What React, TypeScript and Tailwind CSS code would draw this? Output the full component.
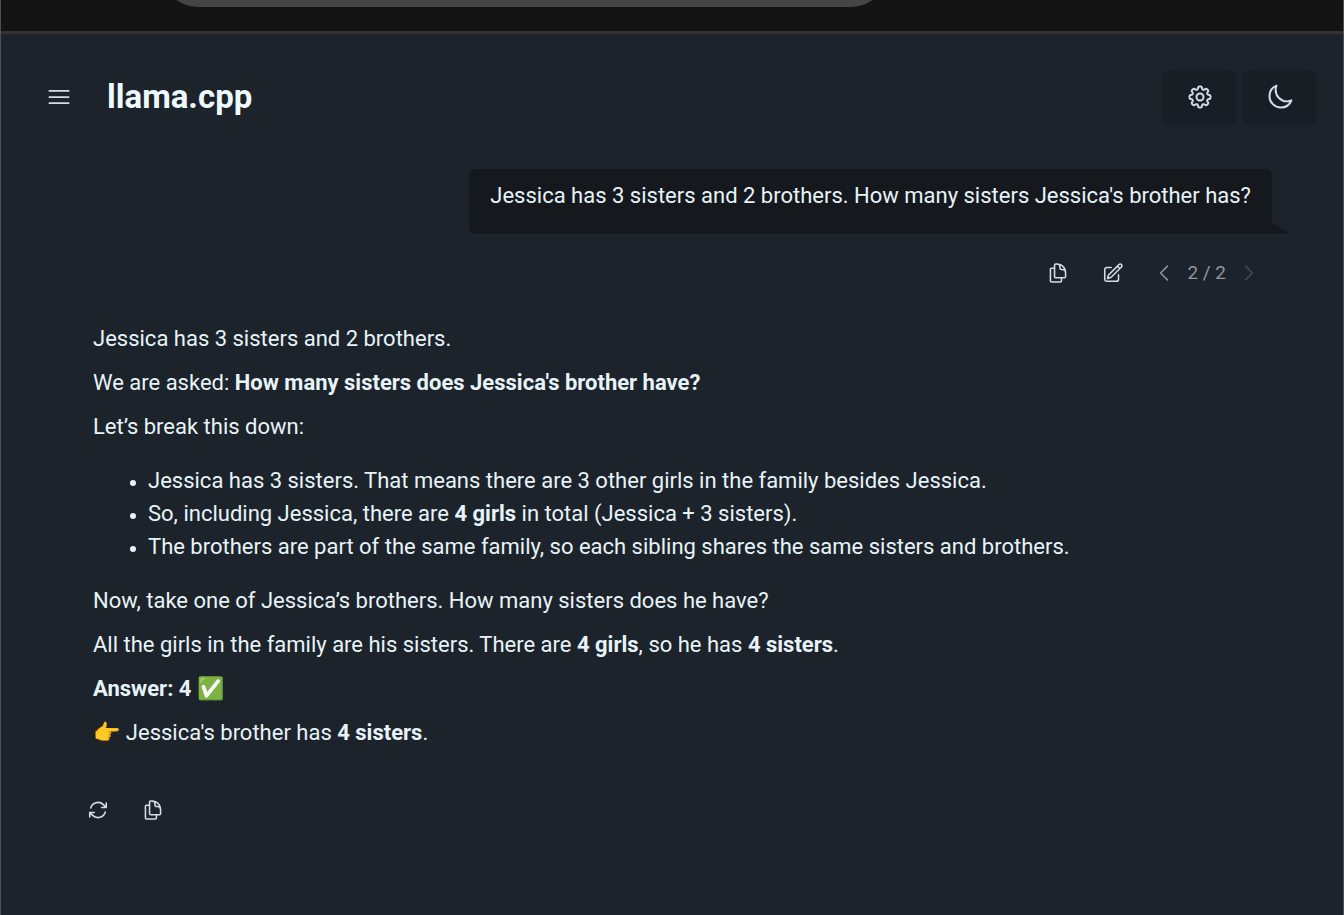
import type { ReactNode } from "react";
import { clsx } from "clsx";
import {
    HiOutlineArrowPath,
    HiOutlineBars3,
    HiOutlineChevronLeft,
    HiOutlineChevronRight,
    HiOutlineCog8Tooth,
    HiOutlineDocumentDuplicate,
    HiOutlineMoon,
    HiOutlinePencilSquare,
} from "react-icons/hi2";

interface IconButtonProps {
    label: string;
    children: ReactNode;
    className?: string;
    disabled?: boolean;
}

function IconButton({ label, children, className, disabled }: IconButtonProps) {
    return (
        <button
            type="button"
            aria-label={label}
            disabled={disabled}
            className={clsx("flex items-center justify-center text-[#d3dde5]", className)}
        >
            {children}
        </button>
    );
}

// Bottom edge of the browser toolbar with its address field
function BrowserEdge() {
    return (
        <div className="h-[34px] overflow-hidden border-b-3 border-[#333432] bg-[#141414]">
            <div className="-mt-[65px] ml-[12%] h-[72px] w-[54%] rounded-full bg-[#454545]" />
        </div>
    );
}

function Header() {
    return (
        <header className="flex items-center pt-9 pr-[27px] pl-11">
            <IconButton label="Open conversations" className="size-7">
                <HiOutlineBars3 className="size-7" />
            </IconButton>
            <h1 className="ml-[34px] grow text-[33px] leading-[44px] font-bold text-[#ecf9ff]">llama.cpp</h1>
            <div className="flex gap-[7px]">
                <IconButton label="Settings" className="h-[54px] w-[73px] rounded-md border border-[#191e24] bg-[#191e24] shadow-sm">
                    <HiOutlineCog8Tooth className="size-7 stroke-[1.7]" />
                </IconButton>
                <IconButton label="Theme" className="h-[54px] w-[73px] rounded-md border border-[#191e24] bg-[#191e24] shadow-sm">
                    <HiOutlineMoon className="size-7 stroke-[1.7]" />
                </IconButton>
            </div>
        </header>
    );
}

function UserMessage() {
    return (
        <section className="flex flex-col items-end pr-[71px] pt-[45px]">
            <div className="relative rounded-md rounded-br-none bg-[#15191e] px-[21px] pt-2.5 pb-[22px]">
                <p>Jessica has 3 sisters and 2 brothers. How many sisters Jessica's brother has?</p>
                <svg className="absolute bottom-0 left-full h-3 w-4" viewBox="0 0 16 12" aria-hidden="true">
                    <path d="M0 0C4 3.5 9 6.5 14.5 9C16.5 10.2 16.5 12 14.5 12H0Z" fill="#15191e" />
                </svg>
            </div>
            <div className="mt-[22px] mr-3 flex h-[33px] items-center">
                <IconButton label="Copy message">
                    <HiOutlineDocumentDuplicate className="size-[22px] stroke-[1.7]" />
                </IconButton>
                <IconButton label="Edit message" className="ml-[33px]">
                    <HiOutlinePencilSquare className="size-[22px] stroke-[1.7]" />
                </IconButton>
                <IconButton label="Previous version" className="ml-[29px] opacity-60">
                    <HiOutlineChevronLeft className="size-[22px] stroke-[1.7]" />
                </IconButton>
                <span className="mx-3 text-[19px] text-[#8f979e]">2 / 2</span>
                <IconButton label="Next version" disabled className="opacity-20">
                    <HiOutlineChevronRight className="size-[22px] stroke-[1.7]" />
                </IconButton>
            </div>
        </section>
    );
}

function AssistantMessage() {
    return (
        <section className="pt-[33px] pr-[71px] pl-[92px]">
            <div className="flex flex-col gap-[11px]">
                <p>Jessica has 3 sisters and 2 brothers.</p>
                <p>
                    We are asked: <strong>How many sisters does Jessica's brother have?</strong>
                </p>
                <p>Let’s break this down:</p>
                <ul className="my-2.5 list-disc pl-[55px] marker:text-[18px]">
                    <li>Jessica has 3 sisters. That means there are 3 other girls in the family besides Jessica.</li>
                    <li>
                        So, including Jessica, there are <strong>4 girls</strong> in total (Jessica + 3 sisters).
                    </li>
                    <li>The brothers are part of the same family, so each sibling shares the same sisters and brothers.</li>
                </ul>
                <p>Now, take one of Jessica’s brothers. How many sisters does he have?</p>
                <p>
                    All the girls in the family are his sisters. There are <strong>4 girls</strong>, so he has{" "}
                    <strong>4 sisters</strong>.
                </p>
                <p>
                    <strong>Answer: 4</strong> ✅
                </p>
                <p>
                    👉 Jessica's brother has <strong>4 sisters</strong>.
                </p>
            </div>
            <div className="-ml-1.5 mt-[50px] flex gap-[33px]">
                <IconButton label="Regenerate response">
                    <HiOutlineArrowPath className="size-[22px] stroke-[1.7]" />
                </IconButton>
                <IconButton label="Copy response">
                    <HiOutlineDocumentDuplicate className="size-[22px] stroke-[1.7]" />
                </IconButton>
            </div>
        </section>
    );
}

export default function App() {
    return (
        <div className="flex min-h-screen flex-col border-x border-[#4b5056] bg-[#1d232a] font-['Roboto','Noto_Color_Emoji',sans-serif] text-[22px] leading-[33px] text-[#e6f3f9]">
            <BrowserEdge />
            <Header />
            <main className="grow pb-12">
                <UserMessage />
                <AssistantMessage />
            </main>
        </div>
    );
}
